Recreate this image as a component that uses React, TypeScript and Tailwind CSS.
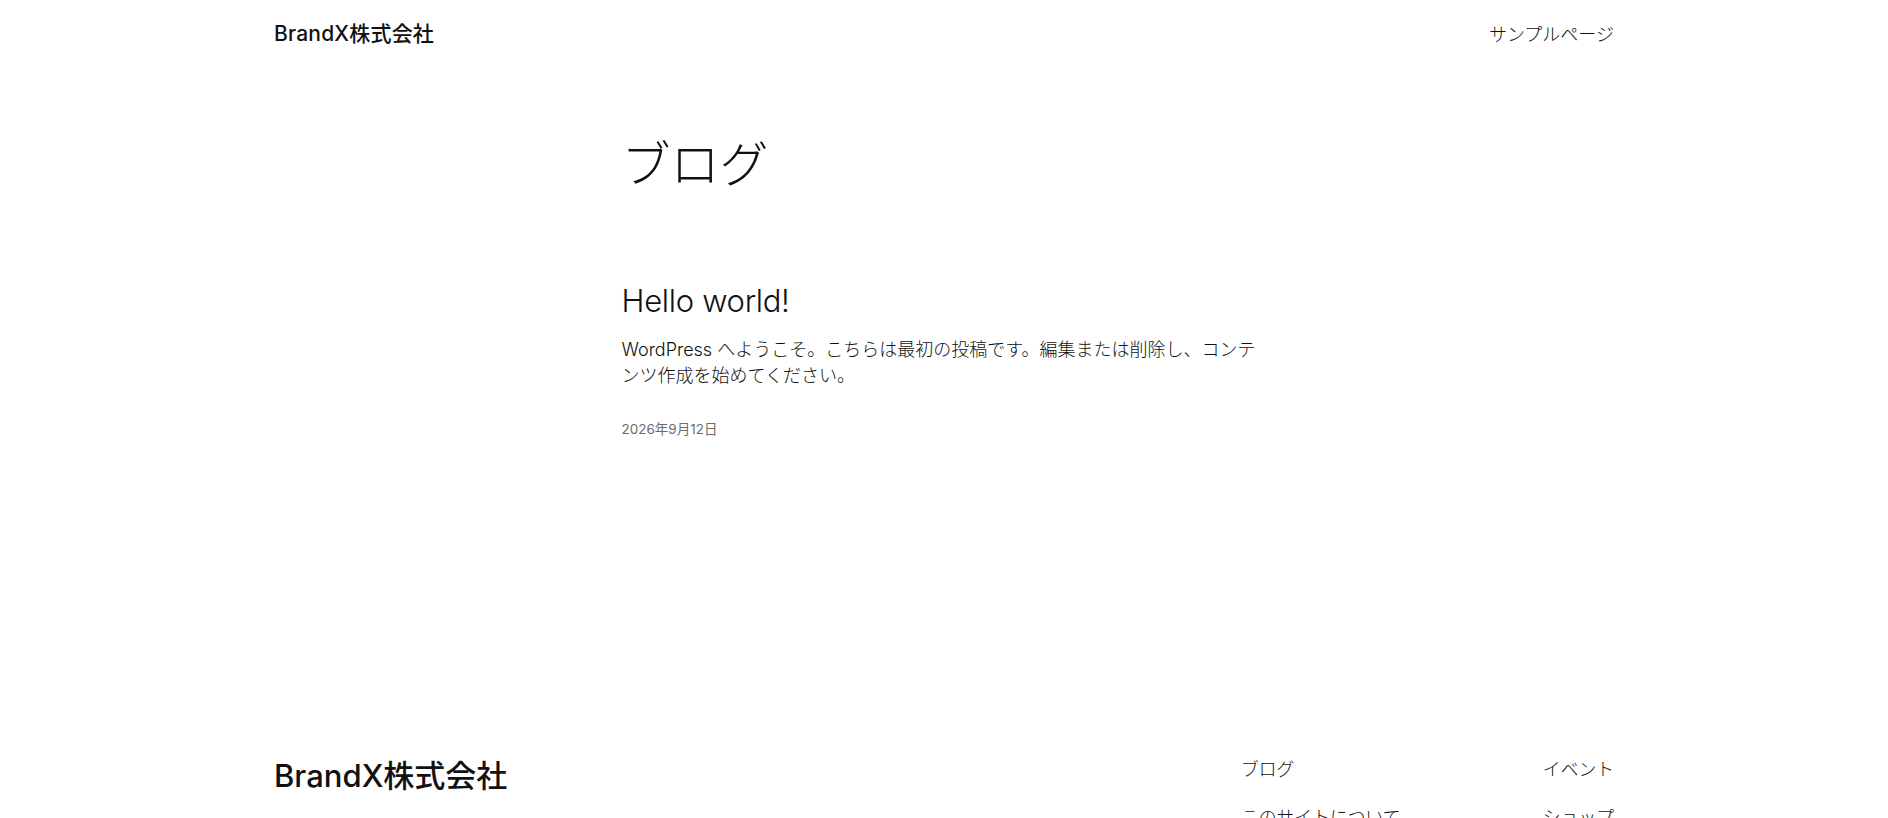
const font = "font-['Inter','Noto_Sans_CJK_JP',sans-serif]";

function Header() {
  return (
    <header className="mx-auto flex h-[68px] w-[1340px] items-center justify-between">
      <a className="text-[21px] font-medium tracking-[0.2px] text-[#111111]">BrandX株式会社</a>
      <nav>
        <a className="text-[18px] font-light text-[#111111]">サンプルページ</a>
      </nav>
    </header>
  );
}

function PostItem() {
  return (
    <article className="flex flex-col">
      <h2 className="text-[31px] font-light leading-[1.2] tracking-[-0.3px] text-[#111111]">Hello world!</h2>
      <p className="mt-[18px] text-[18px] font-light leading-[26px] text-[#111111]">
        WordPress へようこそ。こちらは最初の投稿です。編集または削除し、コンテンツ作成を始めてください。
      </p>
      <time className="mt-[30px] text-[13.5px] leading-[20px] text-[#6b6b6b]">2026年9月12日</time>
    </article>
  );
}

function Footer() {
  return (
    <footer className="mx-auto mt-[319px] flex w-[1340px] items-start justify-between">
      <div className="text-[31px] font-medium leading-[36px] tracking-[0px] text-[#111111]">BrandX株式会社</div>
      <div className="-mt-[2px] flex w-[373px] justify-between text-[17.8px] font-light leading-[27px] text-[#111111]">
        <ul className="flex flex-col gap-[21px]">
          <li>ブログ</li>
          <li>このサイトについて</li>
        </ul>
        <ul className="flex flex-col items-end gap-[21px]">
          <li>イベント</li>
          <li>ショップ</li>
        </ul>
      </div>
    </footer>
  );
}

export default function App() {
  return (
    <div className={`${font} min-h-screen overflow-hidden bg-white`}>
      <Header />
      <main className="mx-auto w-[645px]">
        <h1 className="mt-[67px] text-[49px] font-light leading-[1.22] tracking-[0px] text-[#111111]">ブログ</h1>
        <div className="mt-[87px]">
          <PostItem />
        </div>
      </main>
      <Footer />
    </div>
  );
}
